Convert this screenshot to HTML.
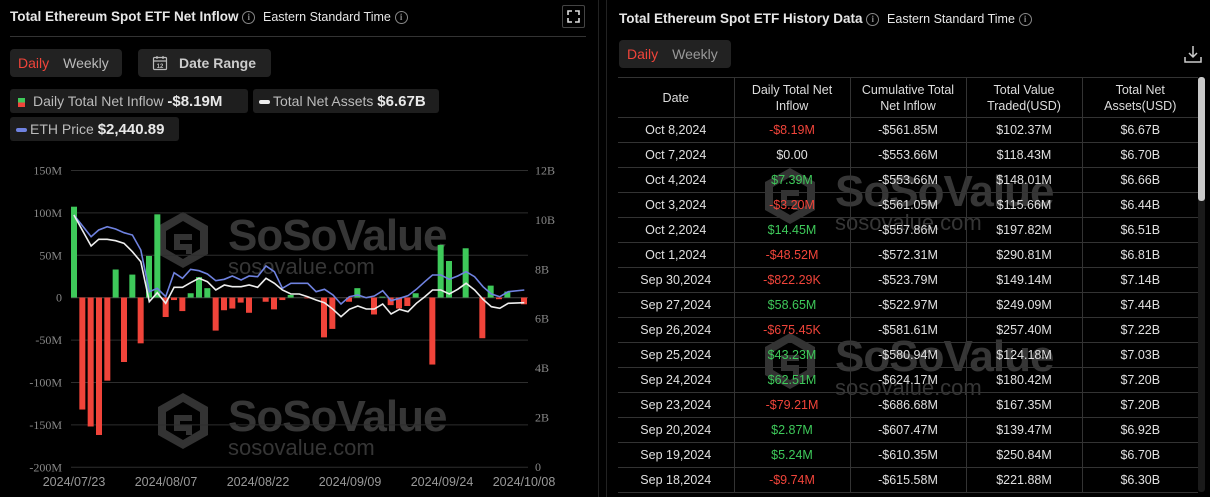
<!DOCTYPE html>
<html><head><meta charset="utf-8">
<style>
*{margin:0;padding:0;box-sizing:border-box}
body{width:1210px;height:497px;background:#000;font-family:"Liberation Sans",sans-serif;color:#ddd;position:relative;overflow:hidden}
.abs{position:absolute}
.title{font-weight:bold;font-size:13.5px;color:#e6e6e6;white-space:nowrap}
.sub{font-size:12.5px;color:#e6e6e6;white-space:nowrap}
.info{display:inline-block;width:13px;height:13px;border:1px solid #888;border-radius:50%;font-size:9px;line-height:11px;text-align:center;color:#888;vertical-align:middle;font-family:"Liberation Serif",serif}
.seg{background:#222;border-radius:4px;font-size:14px}
.pill{background:#1e1e1e;border-radius:3px;height:24px;font-size:14px;color:#bbb;white-space:nowrap;line-height:24px;padding:0 6px}
.pill b{color:#e8e8e8;font-size:15px}
table{border-collapse:collapse;font-size:12.5px;color:#e0e0e0}
td,th{border-right:1px solid #333;border-bottom:1px solid #333;text-align:center;font-weight:normal}
td:last-child,th:last-child{border-right:none}
th{height:40px;line-height:16px;color:#ddd}
td{height:25px}
.r{color:#f0443a}.g{color:#3ec95a}
</style></head><body>
<svg class="abs" style="left:0;top:0" width="1210" height="497" id="wm"></svg>
<!-- Left panel -->
<div class="abs" style="left:598px;top:0;width:1px;height:497px;background:#222"></div>
<div class="abs" style="left:606px;top:0;width:1px;height:497px;background:#222"></div>
<div class="abs title" style="left:10px;top:9px">Total Ethereum Spot ETF Net Inflow <span class="info">i</span> <span class="sub" style="font-weight:normal;margin-left:4px">Eastern Standard Time</span> <span class="info">i</span></div>
<div class="abs" style="left:562px;top:5px;width:23px;height:23px;border:1px solid #444;border-radius:2px">
<svg width="21" height="21" viewBox="0 0 21 21" fill="none" stroke="#ddd" stroke-width="1.6"><path d="M5 9V5h4M12 5h4v4M16 12v4h-4M9 16H5v-4"/></svg></div>
<div class="abs" style="left:10px;top:36px;width:576px;height:1px;background:#333"></div>
<div class="abs seg" style="left:10px;top:49px;width:112px;height:28px;line-height:28px"><span style="color:#f0443a;margin-left:8px">Daily</span><span style="color:#bbb;margin-left:14px">Weekly</span></div>
<div class="abs seg" style="left:138px;top:49px;width:133px;height:28px;line-height:28px;color:#ccc;font-weight:bold">
<svg class="abs" style="left:14px;top:6px" width="16" height="16" viewBox="0 0 16 16" fill="none" stroke="#bbb" stroke-width="1.2"><rect x="1.5" y="2.5" width="13" height="12" rx="1"/><path d="M1.5 6h13M5 1v3M11 1v3"/><text x="8" y="13" font-size="6" fill="#bbb" stroke="none" text-anchor="middle" font-family="Liberation Sans">12</text></svg>
<span style="margin-left:41px">Date Range</span></div>
<div class="abs pill" style="left:10px;top:89px;width:238px"><span style="display:inline-block;width:7px;height:9px;vertical-align:middle;background:linear-gradient(#3ec95a 50%,#f0443a 50%);margin:0 8px 0 2px"></span>Daily Total Net Inflow <b>-$8.19M</b></div>
<div class="abs pill" style="left:253px;top:89px;width:186px"><span style="display:inline-block;width:11px;height:4px;border-radius:2px;background:#eee;vertical-align:middle;margin-right:3px"></span>Total Net Assets <b>$6.67B</b></div>
<div class="abs pill" style="left:10px;top:117px;width:169px"><span style="display:inline-block;width:11px;height:4px;border-radius:2px;background:#6f82e0;vertical-align:middle;margin-right:3px"></span>ETH Price <b>$2,440.89</b></div>

<svg id="chart" class="abs" style="left:0;top:150px" width="600" height="347"></svg>

<!-- Right panel -->
<div class="abs title" style="left:619px;top:11px">Total Ethereum Spot ETF History Data <span class="info">i</span> <span class="sub" style="font-weight:normal;margin-left:4px">Eastern Standard Time</span> <span class="info">i</span></div>
<div class="abs seg" style="left:619px;top:40px;width:112px;height:28px;line-height:28px"><span style="color:#f0443a;margin-left:8px">Daily</span><span style="color:#999;margin-left:14px">Weekly</span></div>
<svg class="abs" style="left:1183px;top:44px" width="20" height="20" viewBox="0 0 20 20" fill="none" stroke="#ccc" stroke-width="1.5"><path d="M10 2v11M6 9l4 4 4-4M2 13v5h16v-5"/></svg>
<div class="abs" style="left:1198px;top:77px;width:7px;height:415px;background:#1a1a1a;border-radius:3px"></div>
<div class="abs" style="left:1198px;top:77px;width:7px;height:124px;background:#c8c8c8;border-radius:3px"></div>
<table class="abs" style="left:618px;top:77px;width:580px;border-top:1px solid #333">
<colgroup><col style="width:116px"><col style="width:116px"><col style="width:116px"><col style="width:116px"><col style="width:116px"></colgroup>
<tr><th>Date</th><th>Daily Total Net<br>Inflow</th><th>Cumulative Total<br>Net Inflow</th><th>Total Value<br>Traded(USD)</th><th>Total Net<br>Assets(USD)</th></tr>
<tr><td>Oct 8,2024</td><td class="r">-$8.19M</td><td>-$561.85M</td><td>$102.37M</td><td>$6.67B</td></tr>
<tr><td>Oct 7,2024</td><td>$0.00</td><td>-$553.66M</td><td>$118.43M</td><td>$6.70B</td></tr>
<tr><td>Oct 4,2024</td><td class="g">$7.39M</td><td>-$553.66M</td><td>$148.01M</td><td>$6.66B</td></tr>
<tr><td>Oct 3,2024</td><td class="r">-$3.20M</td><td>-$561.05M</td><td>$115.66M</td><td>$6.44B</td></tr>
<tr><td>Oct 2,2024</td><td class="g">$14.45M</td><td>-$557.86M</td><td>$197.82M</td><td>$6.51B</td></tr>
<tr><td>Oct 1,2024</td><td class="r">-$48.52M</td><td>-$572.31M</td><td>$290.81M</td><td>$6.81B</td></tr>
<tr><td>Sep 30,2024</td><td class="r">-$822.29K</td><td>-$523.79M</td><td>$149.14M</td><td>$7.14B</td></tr>
<tr><td>Sep 27,2024</td><td class="g">$58.65M</td><td>-$522.97M</td><td>$249.09M</td><td>$7.44B</td></tr>
<tr><td>Sep 26,2024</td><td class="r">-$675.45K</td><td>-$581.61M</td><td>$257.40M</td><td>$7.22B</td></tr>
<tr><td>Sep 25,2024</td><td class="g">$43.23M</td><td>-$580.94M</td><td>$124.18M</td><td>$7.03B</td></tr>
<tr><td>Sep 24,2024</td><td class="g">$62.51M</td><td>-$624.17M</td><td>$180.42M</td><td>$7.20B</td></tr>
<tr><td>Sep 23,2024</td><td class="r">-$79.21M</td><td>-$686.68M</td><td>$167.35M</td><td>$7.20B</td></tr>
<tr><td>Sep 20,2024</td><td class="g">$2.87M</td><td>-$607.47M</td><td>$139.47M</td><td>$6.92B</td></tr>
<tr><td>Sep 19,2024</td><td class="g">$5.24M</td><td>-$610.35M</td><td>$250.84M</td><td>$6.70B</td></tr>
<tr><td>Sep 18,2024</td><td class="r">-$9.74M</td><td>-$615.58M</td><td>$221.88M</td><td>$6.30B</td></tr>
</table>

<script>
var NS="http://www.w3.org/2000/svg";
function el(p,t,a,txt){var e=document.createElementNS(NS,t);for(var k in a)e.setAttribute(k,a[k]);if(txt!=null)e.textContent=txt;p.appendChild(e);return e;}
var c=document.getElementById('chart');
function Y(v){return 147.5-v*0.8487;}
var L=71,R=528;
var lv=[150,100,50,0,-50,-100,-150,-200],rv=['12B','10B','8B','6B','4B','2B','0'];
for(var i=0;i<8;i++){var y=20.5+i*42.4;el(c,'line',{x1:L,x2:R,y1:y,y2:y,stroke:i==3?'#444':'#2e2e2e','stroke-width':1});
el(c,'text',{x:62,y:y+4,fill:'#888','font-size':12,'text-anchor':'end','font-family':'Liberation Serif'},lv[i]+(lv[i]?'M':''));}
for(var i=0;i<7;i++){var y=20.5+i*49.4;el(c,'text',{x:535,y:y+4,fill:'#888','font-size':12,'font-family':'Liberation Serif'},rv[i]);}
var d=['2024/07/23','2024/08/07','2024/08/22','2024/09/09','2024/09/24','2024/10/08'],dx=[74,166,258,350,442,524];
for(var i=0;i<6;i++)el(c,'text',{x:dx[i],y:336,fill:'#999','font-size':12.5,'text-anchor':'middle'},d[i]);
var w=document.getElementById('wm');
function mark(x,y,s){var g=el(w,'g',{transform:'translate('+x+','+y+') scale('+s+')'});
el(g,'path',{d:'M25 0L50 14V42L25 56L0 42V14Z M25 9L8 19V37L25 47L42 37V19Z','fill':'#333','fill-rule':'evenodd'});
el(g,'path',{d:'M16 22h18v6H22v4h12v10h-6v-4H16z',fill:'#333'});
el(g,'text',{x:70,y:38,fill:'#363636','font-size':44,'font-weight':'bold','letter-spacing':'-1'},'SoSoValue');
el(g,'text',{x:70,y:62,fill:'#363636','font-size':22},'sosovalue.com');}
mark(158,212,1);mark(158,393,1);mark(765,168,1);mark(765,333,1);
var vals=[107,-132,-152,-162,-98,33,-76,27,-54,49,98,-23,-3,-16,5,24,11,-39,-15,-13,-6,-18,0,-5,-14,-3,3,0,-1,0,-47,-37,0,-5,11,0,-20,1,-9,-13,-10,5,0,-79,62,43,0,58,0,-48,14,-2,7,0,-8];
var n=vals.length,step=(524-74)/(n-1);
for(var i=0;i<n;i++){var v=vals[i];if(!v)continue;var x=74+i*step,y0=Y(0),y1=Y(v);
el(c,'rect',{x:x-3,y:Math.min(y0,y1),width:6,height:Math.abs(y1-y0),fill:v>0?'#3ec95a':'#f0443a'});}
function line(pts,col){var s='';for(var i=0;i<pts.length;i+=2){s+=(i?'L':'M')+(pts[i]/2.613).toFixed(1)+' '+(pts[i+1]/3).toFixed(1);}
el(c,'path',{d:s,fill:'none',stroke:col,'stroke-width':1.6});}
line([193,195,238,260,258,240,280,230,302,237,324,248,346,255,368,300,390,425,411,415,433,440,455,368,477,385,498,358,520,362,542,372,564,392,586,388,607,378,630,390,651,378,673,380,695,348,717,365,738,415,760,400,782,400,804,400,826,425,848,418,870,435,891,462,913,440,935,435,957,443,978,438,1000,422,1022,452,1044,445,1066,437,1088,418,1110,395,1130,375,1152,375,1174,388,1196,378,1218,365,1240,380,1262,410,1284,432,1306,440,1328,425,1370,420],'#6f82e0');
line([193,195,238,288,258,268,280,268,302,272,324,280,346,305,368,335,390,455,411,428,433,460,455,412,477,412,498,398,520,385,542,395,564,420,586,405,607,410,630,410,651,405,673,412,695,385,717,400,738,420,760,432,782,432,804,440,826,450,848,458,870,478,891,500,913,478,935,468,957,477,978,477,1000,462,1022,492,1044,478,1066,485,1088,460,1110,440,1130,420,1152,420,1174,432,1196,418,1218,400,1240,420,1262,448,1284,470,1306,475,1328,460,1370,458],'#eeeeee');
</script>
</body></html>
